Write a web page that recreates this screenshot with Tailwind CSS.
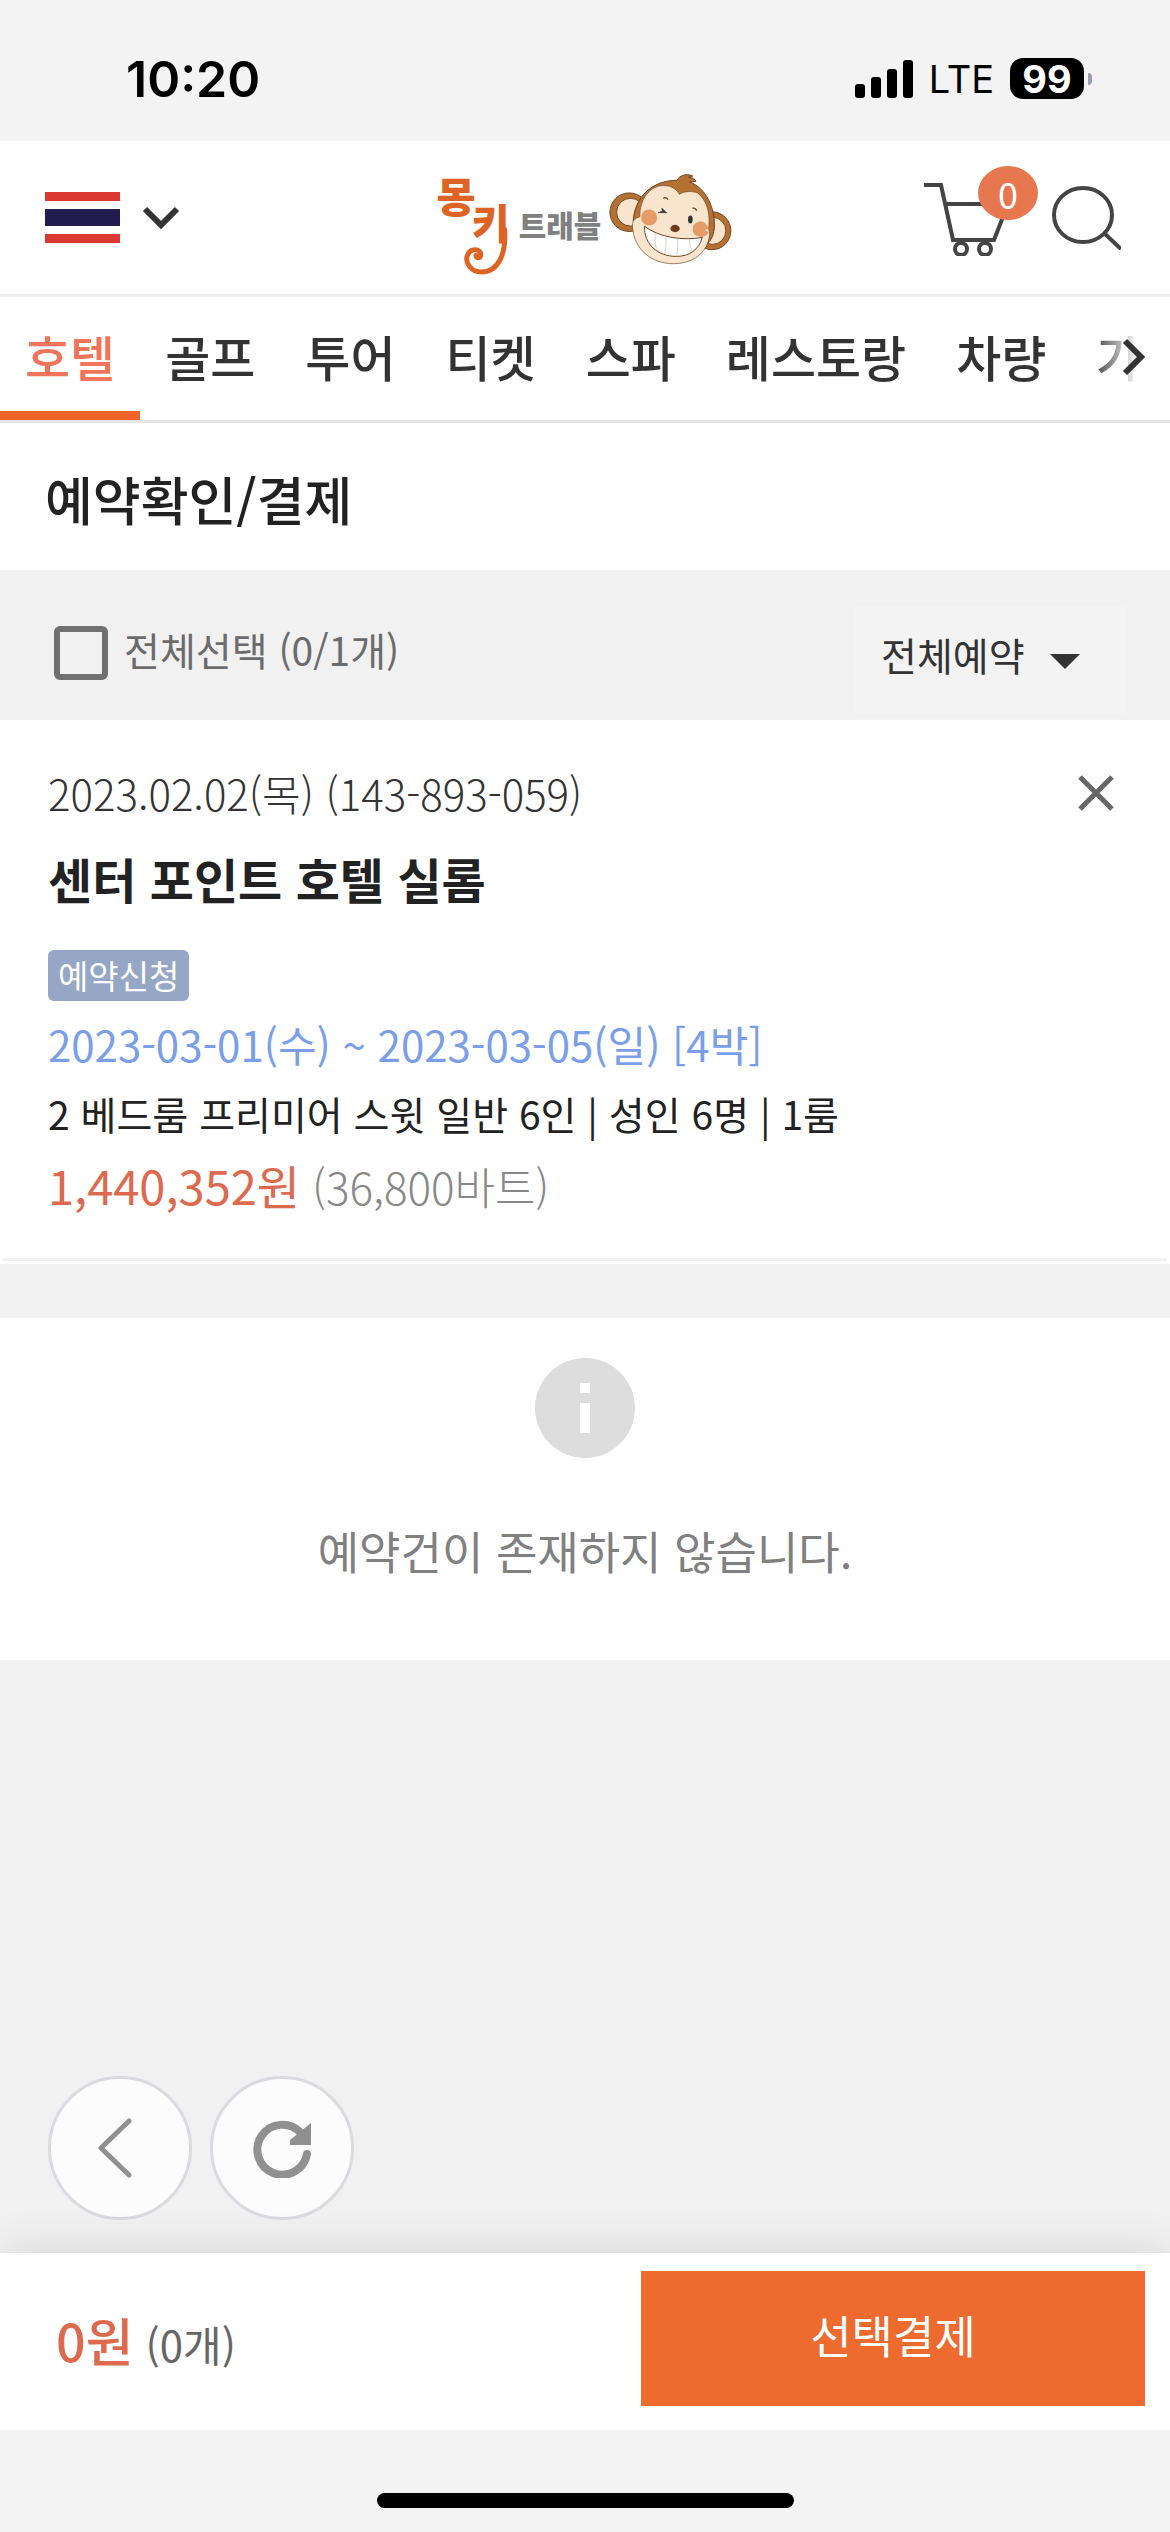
<!DOCTYPE html>
<html lang="ko">
  <head>
    <meta charset="UTF-8" />
    <meta name="viewport" content="width=device-width, initial-scale=1.0" />
    <script src="https://cdn.jsdelivr.net/npm/@tailwindcss/browser@4"></script>
    <title>몽키트래블 - 예약확인/결제</title>
  </head>
  <body
    class="min-h-screen flex flex-col bg-[#f1f1f1] text-[#222] font-['Noto_Sans_CJK_KR',sans-serif]"
  >
    <!-- status bar -->
    <div
      class="h-[141px] px-[78px] pt-4 flex items-center justify-between bg-[#f3f3f3] text-black font-['Inter',sans-serif]"
    >
      <span class="pl-12 text-[50px] leading-none font-semibold">10:20</span>
      <div class="flex items-center gap-4">
        <svg class="w-[58px] h-[38px]" viewBox="0 0 58 38">
          <rect x="0" y="24" width="10" height="14" rx="3" />
          <rect x="16" y="17" width="10" height="21" rx="3" />
          <rect x="32" y="9" width="10" height="29" rx="3" />
          <rect x="48" y="0" width="10" height="38" rx="3" />
        </svg>
        <span class="text-[38px] leading-none">LTE</span>
        <div class="flex items-center gap-1">
          <span
            class="w-[74px] h-[41px] rounded-[13px] bg-black text-white text-[38px] leading-none font-bold flex items-center justify-center"
            >99</span
          >
          <span class="w-1 h-3 rounded-r-full bg-gray-400"></span>
        </div>
      </div>
    </div>

    <!-- header -->
    <header
      class="h-[156px] px-[45px] grid grid-cols-[1fr_auto_1fr] items-center bg-white border-b-3 border-[#eee]"
    >
      <button class="flex items-center gap-[22px] cursor-pointer" aria-label="태국">
        <svg class="w-[75px] h-[51px]" viewBox="0 0 75 51">
          <rect width="75" height="9" fill="#dc3832" />
          <rect y="17" width="75" height="17" fill="#231c4e" />
          <rect y="42" width="75" height="9" fill="#dc3832" />
        </svg>
        <svg class="w-[38px] h-6" viewBox="0 0 38 24" fill="none" stroke="#333" stroke-width="6">
          <path d="M3 3 L19 19 L35 3" />
        </svg>
      </button>

      <a href="#" aria-label="몽키트래블">
        <svg class="w-[295px] h-[108px] mt-2 overflow-visible" viewBox="50 55 885 325">
          <!-- wordmark -->
          <g fill="#de6426" font-family="Noto Sans CJK KR, sans-serif" font-weight="900">
            <text x="44" y="190" font-size="128">몽</text>
            <text x="150" y="268" font-size="124">키</text>
          </g>
          <path
            d="M249 240 C254 310 232 368 180 368 C146 368 128 338 138 316 C148 294 180 298 177 318 C175 328 162 326 163 318"
            fill="none"
            stroke="#de6426"
            stroke-width="15"
            stroke-linecap="round"
          />
          <text
            x="292"
            y="264"
            font-size="90"
            fill="#808080"
            font-family="Noto Sans CJK KR, sans-serif"
            font-weight="900"
          >
            트래블
          </text>
          <!-- monkey -->
          <g stroke="#6b4423" stroke-width="3">
            <circle cx="624" cy="188" r="58" fill="#b57132" />
            <circle cx="628" cy="188" r="42" fill="#f9e5cd" />
            <circle cx="873" cy="244" r="57" fill="#b57132" />
            <circle cx="874" cy="244" r="41" fill="#f9e5cd" />
            <path
              d="M636 215 C640 145 690 92 768 92 C775 78 795 70 815 79 L803 83 C815 84 822 88 825 95 L806 97 C855 115 884 175 880 238 C877 262 868 275 858 284 Z"
              fill="#b57132"
            />
            <path
              d="M656 202 C655 150 685 108 728 108 C755 108 768 122 775 134 C790 124 812 124 830 130 C862 155 868 200 863 238 C868 250 866 262 862 275 C850 318 808 343 758 343 C690 343 640 300 634 235 C632 215 640 206 656 202 Z"
              fill="#f9e5cd"
              stroke-width="2"
            />
            <path
              d="M670 230 C710 262 780 275 844 264 C834 300 806 321 766 321 C710 321 668 285 670 230 Z"
              fill="#fff"
            />
          </g>
          <path
            d="M702 250 Q700 275 706 300 M735 262 Q736 290 731 314 M770 268 Q772 296 767 320 M805 270 Q806 290 812 304"
            fill="none"
            stroke="#cbb8ae"
            stroke-width="2"
          />
          <circle cx="684" cy="204" r="24" fill="#e59c68" />
          <path d="M863 238 L852 240 L863 250 C858 258 848 264 838 262 C822 260 814 250 815 238 C816 222 830 215 842 216 C852 218 860 226 863 238 Z" fill="#e59c68" />
          <ellipse cx="762" cy="237" rx="14" ry="11" fill="#6e3a1c" />
          <path d="M711 189 L737 190 L722 176 L724 185 Z" fill="#333" stroke="#333" stroke-width="2" />
          <ellipse cx="808" cy="210" rx="7" ry="12" fill="#333" />
          <path
            d="M726 146 Q735 142 741 150 M814 176 Q824 174 827 184"
            fill="none"
            stroke="#6b4423"
            stroke-width="4"
          />
        </svg>
      </a>

      <div class="flex items-center justify-end gap-3 pr-1">
        <a href="#" class="relative" aria-label="장바구니">
          <svg class="w-[88px] h-[76px]" viewBox="0 0 88 76" fill="none" stroke="#444" stroke-width="4">
            <path d="M0 5 H17 L29 60 H70 L84 24 H22" />
            <circle cx="37" cy="69" r="6" />
            <circle cx="61" cy="69" r="6" />
          </svg>
          <span
            class="absolute -top-[14px] left-[54px] w-[60px] h-[54px] rounded-[50%] bg-[#e7774e] text-white text-[36px] leading-none flex items-center justify-center"
            >0</span
          >
        </a>
        <button class="pl-7 cursor-pointer" aria-label="검색">
          <svg class="w-[69px] h-[64px]" viewBox="0 0 69 64" fill="none" stroke="#444" stroke-width="4">
            <ellipse cx="31" cy="29" rx="29" ry="27" />
            <path d="M52 47 L69 63" />
          </svg>
        </button>
      </div>
    </header>

    <!-- category tabs -->
    <nav class="relative h-[126px] bg-white border-b-3 border-[#e5e5e5] overflow-hidden">
      <div
        class="flex h-full text-[49px] leading-[118px] font-medium text-[#333] whitespace-nowrap"
      >
        <a href="#" class="px-[25px] text-[#f2745a] border-b-9 border-[#ee642b]">호텔</a>
        <a href="#" class="px-[25px]">골프</a>
        <a href="#" class="px-[25px]">투어</a>
        <a href="#" class="px-[25px]">티켓</a>
        <a href="#" class="px-[25px]">스파</a>
        <a href="#" class="px-[25px]">레스토랑</a>
        <a href="#" class="px-[25px]">차량</a>
        <a href="#" class="px-[25px]">가</a>
      </div>
      <button
        class="absolute right-0 top-0 h-full w-20 pr-6 flex items-center justify-end bg-linear-to-r from-white/0 to-white to-60% cursor-pointer"
        aria-label="다음"
      >
        <svg class="w-6 h-10 mb-1" viewBox="0 0 24 40" fill="none" stroke="#333" stroke-width="6">
          <path d="M3 4 L19 20 L3 36" />
        </svg>
      </button>
    </nav>

    <h1 class="h-[147px] px-[45px] bg-white text-[52px] leading-[152px] font-medium">
      예약확인/결제
    </h1>

    <!-- select all / filter -->
    <div class="h-[150px] pl-[54px] pr-[45px] pt-9 pb-[6px] flex items-start justify-between">
      <label class="mt-4 flex items-center gap-4 text-[39px] leading-[54px] text-[#6b6b6b]">
        <input
          type="checkbox"
          class="appearance-none w-[54px] h-[54px] border-6 border-[#707070] rounded-md checked:bg-[#707070]"
        />
        <span class="pb-2">전체선택 (0/1개)</span>
      </label>
      <div class="relative">
        <select
          class="appearance-none w-[272px] h-[108px] pl-7 pb-3 bg-[#f3f3f3] text-[39px] text-[#333]"
          aria-label="예약 상태"
        >
          <option>전체예약</option>
        </select>
        <svg class="absolute right-[45px] top-12 w-[30px] h-[15px]" viewBox="0 0 30 15">
          <path d="M0 0 H30 L15 15 Z" fill="#333" />
        </svg>
      </div>
    </div>

    <!-- booking -->
    <section class="bg-white pb-[3px]">
      <div class="mx-[3px] pt-10 px-[45px] pb-9 border-b-3 border-[#f1f1f1]">
        <div class="flex items-center justify-between pr-2">
          <p class="text-[42px] leading-[66px] font-light text-[#333]">
            2023.02.02(목) (143-893-059)
          </p>
          <button class="cursor-pointer" aria-label="삭제">
            <svg class="w-9 h-9" viewBox="0 0 36 36" fill="none" stroke="#666" stroke-width="5">
              <path d="M2 2 L34 34 M34 2 L2 34" />
            </svg>
          </button>
        </div>
        <h2 class="mt-4 text-[48px] leading-[72px] font-bold">센터 포인트 호텔 실롬</h2>
        <div class="mt-9 flex">
          <span
            class="h-[51px] px-[10px] rounded-md bg-[#96a6c5] text-white text-[33px] leading-[50px]"
            >예약신청</span
          >
        </div>
        <p class="mt-[10px] text-[42px] leading-[66px] text-[#7a9fe8]">
          2023-03-01(수) ~ 2023-03-05(일) [4박]
        </p>
        <p class="text-[39px] leading-[72px]">
          2 베드룸 프리미어 스윗 일반 6인 | 성인 6명 | 1룸
        </p>
        <p class="flex items-baseline gap-3 leading-[72px] text-[#888]">
          <span class="text-[47px] text-[#dd694f]">1,440,352원</span>
          <span class="text-[44px] font-light">(36,800바트)</span>
        </p>
      </div>
    </section>

    <section class="mt-[54px] pt-10 pb-[76px] bg-white flex flex-col items-center">
      <svg class="w-[100px] h-[100px]" viewBox="0 0 100 100">
        <circle cx="50" cy="50" r="50" fill="#ddd" />
        <path d="M45 25 H55 V35 H45 Z M45 45 H55 V75 H45 Z" fill="#fff" />
      </svg>
      <p class="mt-[60px] text-[45px] leading-[66px] text-[#808080]">예약건이 존재하지 않습니다.</p>
    </section>

    <!-- floating buttons -->
    <div class="flex-1 px-12 pb-[33px] flex items-end gap-[18px]">
      <button
        class="w-36 h-36 rounded-full border-3 border-[#dadae0] bg-[#fcfcfc] flex items-center justify-center cursor-pointer"
        aria-label="뒤로"
      >
        <svg class="w-9 h-[60px] mr-3" viewBox="0 0 36 60" fill="none" stroke="#909090" stroke-width="5" stroke-linecap="round" stroke-linejoin="round">
          <path d="M33 3 L5 30 L33 57" />
        </svg>
      </button>
      <button
        class="w-36 h-36 rounded-full border-3 border-[#dadae0] bg-[#fcfcfc] flex items-center justify-center cursor-pointer"
        aria-label="새로고침"
      >
        <svg class="w-[60px] h-[60px]" viewBox="0 0 60 60">
          <path d="M55 36 A25 25 0 1 1 48 14" fill="none" stroke="#909090" stroke-width="8" stroke-linecap="round" />
          <path d="M59 5 V27 H38 V22 Z" fill="#909090" />
        </svg>
      </button>
    </div>

    <!-- payment bar -->
    <footer class="sticky bottom-0">
      <div
        class="h-[177px] pl-14 pr-[25px] pt-[18px] flex items-start justify-between bg-white shadow-[0_0_45px_rgba(0,0,0,0.12)]"
      >
        <p class="flex items-baseline gap-3 leading-[138px] text-[#666]">
          <span class="text-[52px] font-medium text-[#dd694f]">0원</span>
          <span class="text-[42px]">(0개)</span>
        </p>
        <button class="w-[504px] h-[135px] pb-2 bg-[#ed6b2f] text-white text-[45px] cursor-pointer">
          선택결제
        </button>
      </div>
      <div class="relative h-[102px] pt-[63px] bg-[#f3f3f3]">
        <div class="mx-auto w-[417px] h-[15px] rounded-full bg-black"></div>
      </div>
    </footer>
  </body>
</html>
